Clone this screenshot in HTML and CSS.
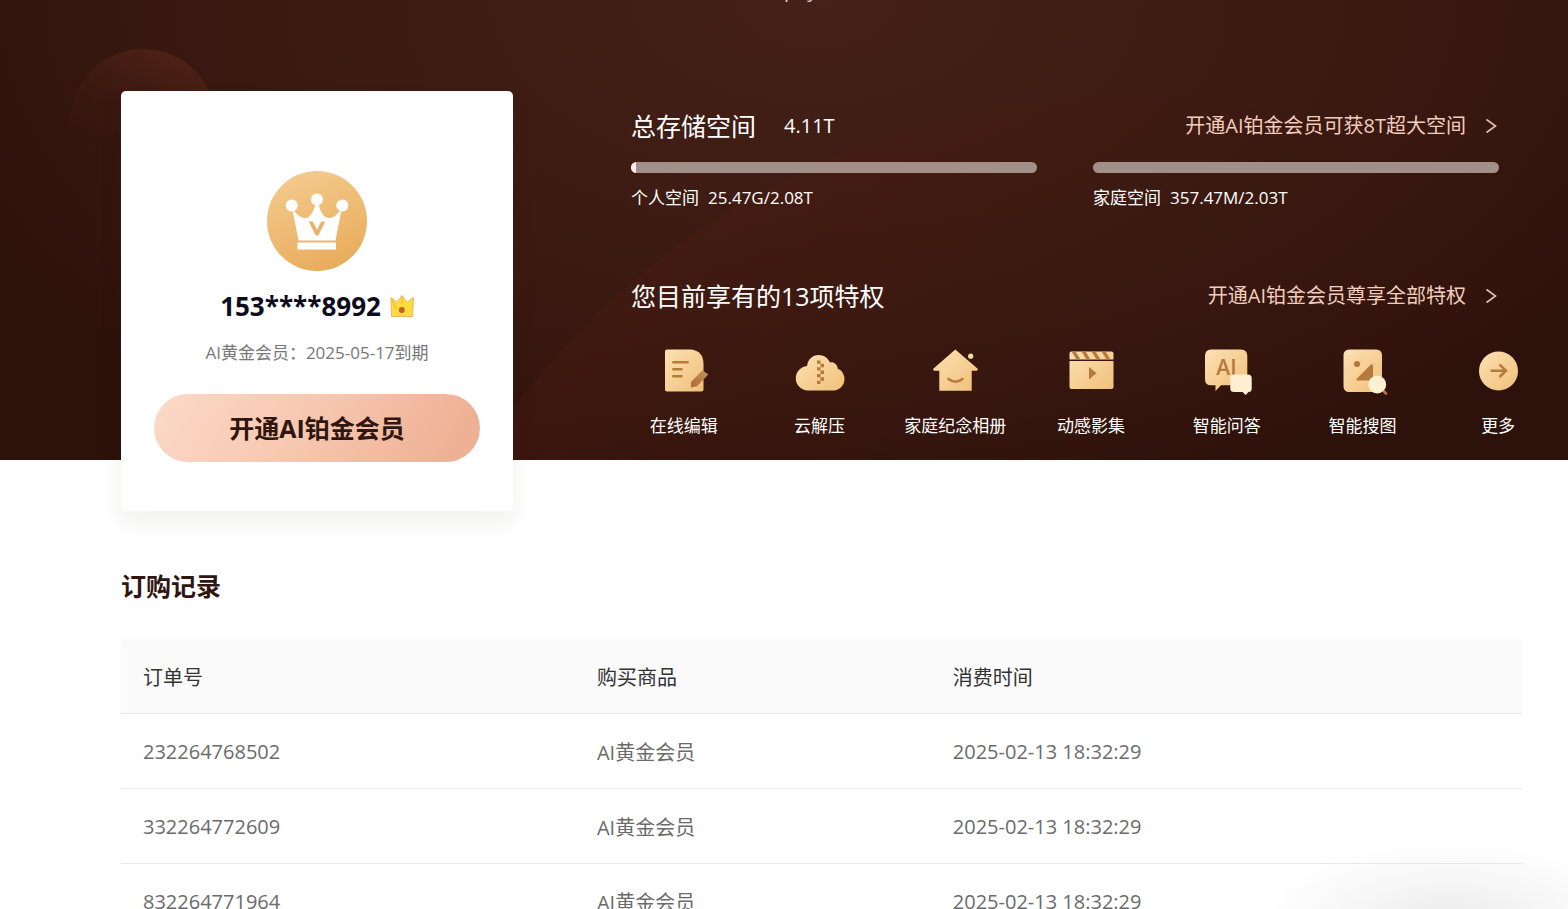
FILE: index.html
```html
<!DOCTYPE html>
<html lang="zh-CN">
<head>
<meta charset="utf-8">
<title>会员中心</title>
<link rel="stylesheet" href="styles.css">
</head>
<body>
<svg class="defs" aria-hidden="true">
  <defs>
    <linearGradient id="gold" x1="0" y1="0" x2="1" y2="1"><stop offset="0" stop-color="#fde0b4"/><stop offset="1" stop-color="#f0c078"/></linearGradient>
    <linearGradient id="bronze" x1="1" y1="0" x2="0" y2="1"><stop offset="0" stop-color="#c8935a"/><stop offset="1" stop-color="#ad6a36"/></linearGradient>
    <linearGradient id="badge" x1="0.3" y1="0" x2="0.7" y2="1"><stop offset="0" stop-color="#f3ca8d"/><stop offset="1" stop-color="#e8ab5a"/></linearGradient>
  </defs>
</svg>

<header class="hero">
  <svg class="hero-art" viewBox="0 0 1568 460" preserveAspectRatio="xMidYMid slice" aria-hidden="true">
    <defs>
      <linearGradient id="orb" x1="0.7" y1="0" x2="0.3" y2="1"><stop offset="0" stop-color="#542418" stop-opacity="0.85"/><stop offset="0.75" stop-color="#3a160e" stop-opacity="0"/></linearGradient>
      <linearGradient id="planet" gradientUnits="userSpaceOnUse" x1="850" y1="120" x2="1100" y2="400"><stop offset="0" stop-color="#4a1a12" stop-opacity="0.4"/><stop offset="1" stop-color="#3a140d" stop-opacity="0"/></linearGradient>
    </defs>
    <circle cx="143" cy="122" r="73" fill="url(#orb)"/>
    <circle cx="1130" cy="865" r="767" fill="url(#planet)"/>
  </svg>
  <div class="topline"><span>pay</span></div>

  <div class="hero-body">
    <section class="card">
      <svg class="avatar" viewBox="0 0 100 100" aria-hidden="true">
        <circle cx="50" cy="50" r="50" fill="url(#badge)"/>
        <g fill="#fff">
          <circle cx="24.7" cy="34.5" r="6"/><circle cx="50" cy="28.5" r="6"/><circle cx="75.3" cy="34.5" r="6"/>
          <path d="M25.5 39C30 42 32 47 38 47C44 47 47 39 48.500 33H51.500C53 39 56 47 62 47C68 47 70 42 74.500 39L68.500 69.500H31.500Z"/>
          <rect x="30.500" y="71.500" width="38.500" height="7"/>
        </g>
        <path d="M41.700 50.500H45.700L50 58.800L54.300 50.500H58.300L51.300 64.500H48.700Z" fill="#eab269"/>
      </svg>
      <h1 class="phone">153****8992
        <svg class="mini-crown" viewBox="0 0 24 22" aria-hidden="true">
          <path d="M1 2.500L7 7.500L12 0.500L17 7.500L23.500 2.500L22.500 21.500H1.500Z" fill="#fddc3c" stroke="#f3b35e"/>
          <path d="M12 1v8M2 5l4 9" stroke="#f0a044" stroke-width="1" opacity=".7"/>
          <circle cx="11.800" cy="15" r="3" fill="#bd6428"/>
        </svg>
      </h1>
      <p class="expire">AI黄金会员：2025-05-17到期</p>
      <button class="upgrade" type="button">开通AI铂金会员</button>
    </section>

    <div class="info">
      <section>
        <div class="row">
          <h2>总存储空间<span class="total">4.11T</span></h2>
          <a class="more" href="#">开通AI铂金会员可获8T超大空间<svg viewBox="0 0 12 16" aria-hidden="true"><path d="M1.500 1.500L10.500 8L1.500 14.500"/></svg></a>
        </div>
        <div class="spaces">
          <div>
            <div class="bar"><div class="fill" style="width:1.2%"></div></div>
            <p class="usage"><span>个人空间</span><span>25.47G/2.08T</span></p>
          </div>
          <div>
            <div class="bar"></div>
            <p class="usage"><span>家庭空间</span><span>357.47M/2.03T</span></p>
          </div>
        </div>
      </section>
      <section class="rights">
        <div class="row">
          <h2>您目前享有的13项特权</h2>
          <a class="more" href="#">开通AI铂金会员尊享全部特权<svg viewBox="0 0 12 16" aria-hidden="true"><path d="M1.500 1.500L10.500 8L1.500 14.500"/></svg></a>
        </div>
        <ul class="perks">
          <li>
            <svg viewBox="0 0 52 46" aria-hidden="true"><path d="M9 0.500H33Q45.500 2 45.500 15V40.500Q45.500 42.500 43.500 42.500H9Q7 42.500 7 40.500V2.500Q7 0.500 9 0.500Z" fill="url(#gold)"/><path d="M14.300 13.300H30.700M14.300 20.300H24.500M14.300 27.200H24.500" stroke="#b67a3c" stroke-width="2.600"/><path d="M33 33L44.500 21.300L50.300 25.500L39 37.300L33 38.500Z" fill="url(#bronze)"/></svg>
            <span>在线编辑</span>
          </li>
          <li>
            <svg viewBox="0 0 52 46" aria-hidden="true"><path d="M13 41.500A12.300 12.300 0 0 1 13 17C14 10 18.500 6 24.500 6C30 6 34 9 36 13.500C39.500 12.500 43.500 15.500 43.700 19.500A11.600 11.600 0 0 1 41 41.500Z" fill="url(#gold)"/><path d="M23 11.500h3.500v3.300H30v3.500h-3.500v3.200H30V25h-3.500v3.200H30v3.500h-3.500V35H23v-3.300h3.500v-3.500H23v-3.300h3.500v-3.400H23v-3.300h3.500v-3.400H23z" fill="#b67a3c"/></svg>
            <span>云解压</span>
          </li>
          <li>
            <svg viewBox="0 0 52 46" aria-hidden="true"><path d="M26.300 0.500L49 20L48 21.700H42.700V41.700H10.300V21.700H4.800L4 20Z" fill="url(#gold)"/><circle cx="41.700" cy="7.200" r="2.600" fill="#fbd9a3"/><path d="M19.500 30Q26.500 35.500 33.500 30" fill="none" stroke="#b67a3c" stroke-width="2.600" stroke-linecap="round"/></svg>
            <span>家庭纪念相册</span>
          </li>
          <li>
            <svg viewBox="0 0 52 46" aria-hidden="true"><path d="M4.500 10.500V4.500Q4.500 2.500 6.500 2.500H46.500Q48.500 2.500 48.500 4.500V10.500ZM4.500 12H48.500V38Q48.500 40 46.500 40H6.500Q4.500 40 4.500 38Z" fill="url(#gold)"/><path d="M6.500 2.500h4l5 8h-4zM16.500 2.500h4l5 8h-4zM26.500 2.500h4l5 8h-4zM36.500 2.500h4l5 8h-4z" fill="#b67a3c"/><path d="M24 18L31.500 24.200L24 30.500Z" fill="#b67a3c"/></svg>
            <span>动感影集</span>
          </li>
          <li>
            <svg viewBox="0 0 52 46" aria-hidden="true"><path d="M10 0.500H40Q46.300 0.500 46.300 7V30Q46.300 36.300 40 36.300H20L14.500 42V36.300H10Q4 36.300 4 30V7Q4 0.500 10 0.500Z" fill="url(#gold)"/><text class="ai" x="25.500" y="25.500" text-anchor="middle">AI</text><path d="M33 25.500H47Q50.700 25.500 50.700 29V39.500Q50.700 43 47.500 43L44.700 46L41.500 43H33Q29.300 43 29.300 39.500V29Q29.300 25.500 33 25.500Z" fill="#fff0d2"/></svg>
            <span>智能问答</span>
          </li>
          <li>
            <svg viewBox="0 0 52 46" aria-hidden="true"><rect x="7.500" y="0.500" width="38.500" height="42.500" rx="5.500" fill="url(#gold)"/><circle cx="21" cy="15" r="3.100" fill="#b67a3c"/><path d="M21 29.500L35 15.500Q37 14.500 37 16.500V31.500H22Q19.500 31.500 21 29.500Z" fill="#b67a3c"/><path d="M46.500 41L50 44.500" stroke="#c0783e" stroke-width="2.600" stroke-linecap="round"/><circle cx="41.200" cy="35.500" r="9" fill="#fff0d2"/></svg>
            <span>智能搜图</span>
          </li>
          <li>
            <svg viewBox="0 0 52 46" aria-hidden="true"><circle cx="26.500" cy="22" r="19.500" fill="url(#gold)"/><path d="M18.500 21.700H34M27.500 15.500L34 21.700L27.500 28" fill="none" stroke="#b67a3c" stroke-width="2.500"/></svg>
            <span>更多</span>
          </li>
        </ul>
      </section>
    </div>
  </div>
</header>

<main class="orders">
  <h2 class="orders-title">订购记录</h2>
  <table>
    <colgroup><col class="c-id"><col class="c-item"><col></colgroup>
    <thead>
      <tr><th scope="col">订单号</th><th scope="col">购买商品</th><th scope="col">消费时间</th></tr>
    </thead>
    <tbody>
      <tr><td>232264768502</td><td>AI黄金会员</td><td>2025-02-13 18:32:29</td></tr>
      <tr><td>332264772609</td><td>AI黄金会员</td><td>2025-02-13 18:32:29</td></tr>
      <tr><td>832264771964</td><td>AI黄金会员</td><td>2025-02-13 18:32:29</td></tr>
    </tbody>
  </table>
</main>
</body>
</html>
```
FILE: styles.css
```css
* { box-sizing: border-box; }

html { overflow: hidden; }

body {
  margin: 0;
  font-family: "Open Sans", "Noto Sans CJK SC", sans-serif;
  font-size: 20px;
  color: #6b6b6b;
  background: #fff;
}

h1, h2, p, ul { margin: 0; padding: 0; }

.defs { position: absolute; width: 0; height: 0; }

/* hero */
.hero {
  position: relative;
  padding-top: 91px;
  color: #fff;
  background: radial-gradient(ellipse 60% 115% at 52% 0, #452117 0%, #3e1c13 40%, #35160e 80%, #2d110b 100%);
}

.hero-art { position: absolute; inset: 0; width: 100%; height: 100%; }

.topline {
  position: absolute;
  top: 0;
  left: 50%;
  height: 3px;
  overflow: hidden;
  display: flex;
  align-items: flex-end;
  line-height: 26px;
  color: #d9cfcb;
}

.hero-body {
  position: relative;
  display: grid;
  grid-template-columns: 392px 1fr;
  gap: 118px;
  padding: 0 69px 0 121px;
}

.card {
  display: flex;
  flex-direction: column;
  align-items: center;
  margin-bottom: -51px;
  padding: 80px 33px 49px;
  border-radius: 5px;
  background: #fff;
  box-shadow: 0 12px 24px rgba(40, 40, 30, 0.07);
}

.avatar { width: 100px; height: 100px; }

.phone {
  display: flex;
  align-items: center;
  gap: 9px;
  margin-top: 17px;
  font-size: 26px;
  line-height: 36px;
  font-weight: 700;
  color: #0c0c1c;
}

.mini-crown { width: 24px; height: 22px; }

.expire {
  margin-top: 17px;
  font-size: 17px;
  line-height: 24px;
  color: #777;
}

.upgrade {
  align-self: stretch;
  height: 68px;
  margin-top: 29px;
  border: 0;
  border-radius: 34px;
  font: 700 25px/36px "Open Sans", "Noto Sans CJK SC", sans-serif;
  color: #301610;
  background: linear-gradient(120deg, #fcd9c8 0%, #f7c8b0 45%, #efb196 90%);
}

.info { padding-top: 17px; min-width: 0; }

.row { display: flex; justify-content: space-between; align-items: center; }

.row h2 {
  display: flex;
  align-items: center;
  gap: 28px;
  font-size: 25px;
  line-height: 36px;
  font-weight: 400;
}

.total { font-size: 20px; }

.more {
  display: flex;
  align-items: center;
  gap: 19px;
  padding-right: 2px;
  line-height: 28px;
  color: #f2cdbd;
  text-decoration: none;
}

.more svg {
  width: 12px;
  height: 16px;
  fill: none;
  stroke: #e2c0b2;
  stroke-width: 1.6;
}

.spaces {
  display: grid;
  grid-template-columns: 1fr 1fr;
  gap: 56px;
  margin-top: 18px;
}

.bar {
  height: 11px;
  border-radius: 6px;
  overflow: hidden;
  background: #a18f88;
}

.fill { height: 100%; background: #fdeee8; }

.usage {
  display: flex;
  gap: 9px;
  margin-top: 13px;
  font-size: 17px;
  line-height: 24px;
}

.rights { margin-top: 68px; }

.perks {
  display: grid;
  grid-template-columns: repeat(7, 1fr);
  margin: 35px -67px 0 -15px;
  list-style: none;
}

.perks li {
  display: flex;
  flex-direction: column;
  align-items: center;
  gap: 19px;
  font-size: 17px;
  line-height: 24px;
  white-space: nowrap;
}

.perks svg { width: 52px; height: 46px; }

.ai { font-size: 21px; font-weight: 600; fill: #b67a3c; }

/* orders */
.orders {
  padding: 108px 46px 0 121px;
  min-height: calc(100vh - 460px);
  background: radial-gradient(ellipse 190px 80px at 1450px 460px, #ebebeb 0%, #f6f6f6 50%, rgba(255, 255, 255, 0) 100%);
}

.orders-title {
  font-size: 25px;
  line-height: 36px;
  font-weight: 700;
  color: #301610;
}

table {
  width: 100%;
  margin-top: 35px;
  table-layout: fixed;
  border-collapse: separate;
  border-spacing: 0;
}

.c-id { width: 32.4%; }
.c-item { width: 25.4%; }

th, td {
  height: 75px;
  padding: 0 22px;
  border-bottom: 1px solid #e8e8e8;
  text-align: left;
  font-weight: 400;
}

th { color: #333; background: #fafafa; }
th:first-child { border-top-left-radius: 5px; }
th:last-child { border-top-right-radius: 5px; }
```
